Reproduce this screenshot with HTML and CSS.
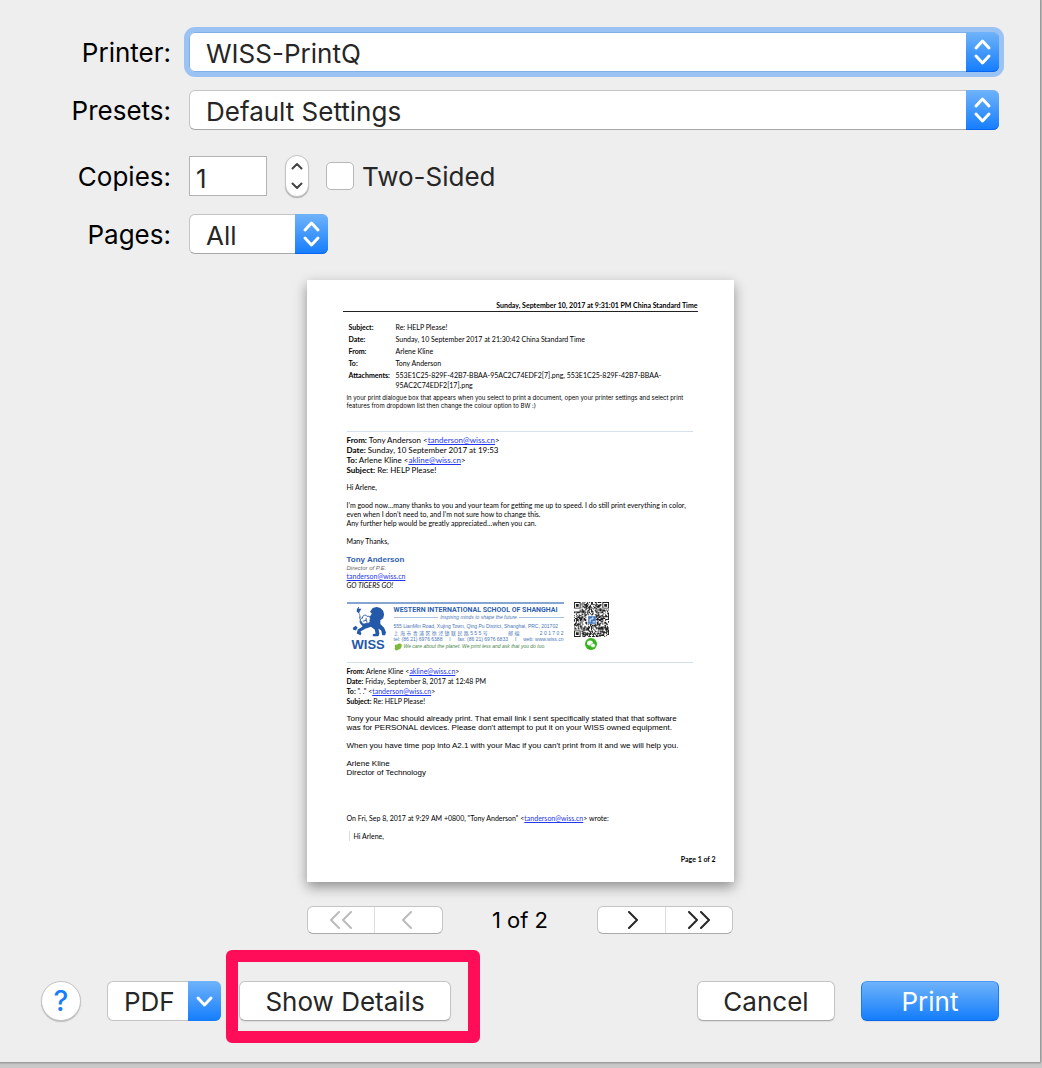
FILE: index.html
```
<!DOCTYPE html>
<html lang="en">
<head>
    <meta charset="UTF-8">
    <meta name="viewport" content="width=device-width, initial-scale=1.0">
    <title>Print</title>
    <link rel="stylesheet" href="styles.css">
</head>
<body>
    <form class="dialog">
        <div class="settings">
            <label for="printer">Printer:</label>
            <div class="select focused">
                <select id="printer"><option>WISS-PrintQ</option></select>
                <svg class="arrows" viewBox="0 0 33 40"><path d="M10 16l6.500-7 6.500 7M10 24l6.500 7 6.500-7"/></svg>
            </div>

            <label for="presets">Presets:</label>
            <div class="select">
                <select id="presets"><option>Default Settings</option></select>
                <svg class="arrows" viewBox="0 0 33 40"><path d="M10 16l6.500-7 6.500 7M10 24l6.500 7 6.500-7"/></svg>
            </div>

            <label for="copies" class="spaced">Copies:</label>
            <div class="copies spaced">
                <input type="text" id="copies" value="1">
                <div class="stepper">
                    <button type="button" aria-label="More copies"><svg viewBox="0 0 12 8"><path d="M1.500 6.500L6 2l4.500 4.500"/></svg></button>
                    <button type="button" aria-label="Fewer copies"><svg viewBox="0 0 12 8"><path d="M1.500 1.500L6 6l4.500-4.500"/></svg></button>
                </div>
                <label class="check"><input type="checkbox">Two-Sided</label>
            </div>

            <label for="pages">Pages:</label>
            <div class="select small">
                <select id="pages"><option>All</option></select>
                <svg class="arrows" viewBox="0 0 33 40"><path d="M10 16l6.500-7 6.500 7M10 24l6.500 7 6.500-7"/></svg>
            </div>
        </div>

        <div class="preview">
            <div class="page">
                <div class="page-head">Sunday, September 10, 2017 at 9:31:01 PM China Standard Time</div>
                <div class="page-body">
                    <table class="meta">
                        <tr><th>Subject:</th><td>Re: HELP Please!</td></tr>
                        <tr><th>Date:</th><td>Sunday, 10 September 2017 at 21:30:42 China Standard Time</td></tr>
                        <tr><th>From:</th><td>Arlene Kline</td></tr>
                        <tr><th>To:</th><td>Tony Anderson</td></tr>
                        <tr><th>Attachments:</th><td>553E1C25-829F-42B7-BBAA-95AC2C74EDF2[7].png, 553E1C25-829F-42B7-BBAA-<br>95AC2C74EDF2[17].png</td></tr>
                    </table>
                    <p class="note">In your print dialogue box that appears when you select to print a document, open your printer settings and select print<br>features from dropdown list then change the colour option to BW :)</p>

                    <div class="quoted first">
                        <b>From:</b> Tony Anderson &lt;<a href="#">tanderson@wiss.cn</a>&gt;<br>
                        <b>Date:</b> Sunday, 10 September 2017 at 19:53<br>
                        <b>To:</b> Arlene Kline &lt;<a href="#">akline@wiss.cn</a>&gt;<br>
                        <b>Subject:</b> Re: HELP Please!
                    </div>
                    <div class="message">
                        <p>Hi Arlene,</p>
                        <p>I’m good now…many thanks to you and your team for getting me up to speed. I do still print everything in color,<br>even when I don’t need to, and I’m not sure how to change this.<br>Any further help would be greatly appreciated…when you can.</p>
                        <p>Many Thanks,</p>
                    </div>
                    <div class="signature">
                        <div class="name">Tony Anderson</div>
                        <div class="role">Director of P.E.</div>
                        <a href="#">tanderson@wiss.cn</a>
                        <div class="cheer">GO TIGERS GO!</div>
                    </div>

                    <div class="banner">
                        <div class="school">
                            <div class="logo">
                                <svg viewBox="0 0 36 32">
                                    <path d="M7 1l3 0-2 3c-1 2 1 3 1 5 0 3-1 4-1 6 1 3 3 3 3 5l-5 3-1 4 4 2 1-2-1-2 5-3 6-2 4 3 1 4-3 1v2h6l1-3-1-5 3 2 1 5h3l1-3-2-5-4-4 0-4 3-2 1-4-1-4-3-3-4-1-4 1-3 4 2 2-2 3-7 1-3 2c-2 0-1-2-1-4 0-3-3-3-3-5 0-2 1-3 3-5z"/>
                                    <path d="M1 21l3-2 2 2-2 3-3-1zM24 5l-2 3 3 1"/>
                                    <path class="wing" d="M10 15c-3-2 0-5 1-4 0-4 4-4 5-2 3-1 4 2 3 4 1 3-3 4-4 3-2 2-4 1-5-1zM12 14l3-1 1 2M15 13l0-2M28 6l2 2"/>
                                </svg>
                                <span>WISS</span>
                            </div>
                            <div class="address">
                                <div class="school-name">WESTERN INTERNATIONAL SCHOOL OF SHANGHAI</div>
                                <div class="motto">Inspiring minds to shape the future</div>
                                <div>555 LianMin Road, Xujing Town, Qing Pu District, Shanghai, PRC, 201702</div>
                                <div class="cn"><span>上 海 市 青 浦 区 徐 泾 镇 联 民 路 5 5 5 号</span><span>邮 编</span><span>2 0 1 7 0 2</span></div>
                                <div class="contact"><span>tel: (86 21) 6976 6388</span><span>I</span><span>fax: (86 21) 6976 6833</span><span>I</span><span>web: www.wiss.cn</span></div>
                                <div class="green"><svg viewBox="0 0 8 8"><path d="M1 4c-1-2 1-3 2-2 1-2 4-2 5 0-1 1 0 2-1 3-1 2-3 1-3 2-2 1-4 0-3-3z"/></svg>We care about the planet. We print less and ask that you do too.</div>
                            </div>
                        </div>
                        <div class="wechat">
                            <svg class="qr" viewBox="0 0 37 37"></svg>
                            <svg class="badge" viewBox="0 0 12 12"><circle cx="6" cy="6" r="6" fill="#35b51c"/><ellipse cx="5" cy="5" rx="3" ry="2.500" fill="#fff"/><ellipse cx="8" cy="7.500" rx="2.500" ry="2" fill="#fff" stroke="#35b51c" stroke-width=".5"/></svg>
                        </div>
                    </div>

                    <div class="quoted">
                        <b>From:</b> Arlene Kline &lt;<a href="#">akline@wiss.cn</a>&gt;<br>
                        <b>Date:</b> Friday, September 8, 2017 at 12:48 PM<br>
                        <b>To:</b> ". ." &lt;<a href="#">tanderson@wiss.cn</a>&gt;<br>
                        <b>Subject:</b> Re: HELP Please!
                    </div>
                    <div class="message reply">
                        <p>Tony your Mac should already print. That email link I sent specifically stated that that software<br>was for PERSONAL devices. Please don't attempt to put it on your WISS owned equipment.</p>
                        <p>When you have time pop into A2.1 with your Mac if you can't print from it and we will help you.</p>
                        <p>Arlene Kline<br>Director of Technology</p>
                    </div>
                    <p class="wrote">On Fri, Sep 8, 2017 at 9:29 AM +0800, "Tony Anderson" &lt;<a href="#">tanderson@wiss.cn</a>&gt; wrote:</p>
                    <blockquote>Hi Arlene,</blockquote>
                </div>
                <div class="page-number">Page 1 of 2</div>
            </div>

            <div class="pager">
                <div class="segments">
                    <button type="button" disabled aria-label="First page"><svg viewBox="0 0 24 18"><path d="M10 1L2 9l8 8M22 1l-8 8 8 8"/></svg></button>
                    <button type="button" disabled aria-label="Previous page"><svg viewBox="0 0 24 18"><path d="M15 1L7 9l8 8"/></svg></button>
                </div>
                <span>1 of 2</span>
                <div class="segments">
                    <button type="button" aria-label="Next page"><svg viewBox="0 0 24 18"><path d="M9 1l8 8-8 8"/></svg></button>
                    <button type="button" aria-label="Last page"><svg viewBox="0 0 24 18"><path d="M2 1l8 8-8 8M14 1l8 8-8 8"/></svg></button>
                </div>
            </div>
        </div>

        <div class="actions">
            <button type="button" class="help">?</button>
            <button type="button" class="pdf"><span>PDF</span><svg viewBox="0 0 33 40"><path d="M10 17l6.500 7 6.500-7"/></svg></button>
            <div class="highlight"><button type="button" class="btn details">Show Details</button></div>
            <button type="button" class="btn cancel">Cancel</button>
            <button type="submit" class="btn print">Print</button>
        </div>
    </form>

    <script src="script.js"></script>
</body>
</html>
```

FILE: styles.css
```
* {
    box-sizing: border-box;
}
body {
    margin: 0;
    min-height: 100vh;
    padding: 0 2px 6px 0;
    background: #c8c8c8;
    font-family: Inter, "Liberation Sans", sans-serif;
    font-size: 26px;
    color: #000;
}
button, input, select {
    font: inherit;
    color: #262626;
    margin: 0;
}
svg {
    display: block;
    fill: none;
    stroke-linecap: round;
    stroke-linejoin: round;
}
.dialog {
    padding: 32px 41px 41px;
    background: #eee;
    box-shadow: 0 0 2px 1px #888;
}

/* settings */
.settings {
    display: grid;
    grid-template-columns: 130px 1fr;
    gap: 18px;
    align-items: center;
}
.settings > label {
    text-align: right;
}
.spaced {
    margin-top: 8px;
}
.select {
    position: relative;
    height: 40px;
    border-radius: 6px;
}
.select select {
    appearance: none;
    width: 100%;
    height: 40px;
    padding: 2px 40px 0 16px;
    border: 1px solid #c4c4c4;
    border-bottom-color: #a8a8a8;
    border-radius: 6px;
    background: #fff;
    outline: none;
}
.select.focused {
    box-shadow: 0 0 0 5px #9ac3f4;
}
.select.focused select {
    border-color: #7fb0e6;
}
.select.small {
    width: 139px;
}
.arrows {
    position: absolute;
    top: 0;
    right: 0;
    width: 33px;
    height: 40px;
    border-radius: 0 6px 6px 0;
    background: linear-gradient(#6fb3fa, #147dfd);
    box-shadow: inset 0 -1px #0a66ee;
    stroke: #fff;
    stroke-width: 3;
    pointer-events: none;
}
.copies {
    display: flex;
    align-items: center;
    height: 40px;
}
.copies input[type="text"] {
    width: 78px;
    height: 40px;
    padding: 4px 6px 0;
    border: 1px solid #b4b4b4;
    background: #fff;
}
.stepper {
    display: flex;
    flex-direction: column;
    width: 24px;
    height: 42px;
    margin: 0 17px 0 18px;
    border: 1px solid #c4c4c4;
    border-radius: 12px;
    background: #fff;
    box-shadow: 0 1px 1px #aaa;
}
.stepper button {
    flex: 1;
    display: flex;
    align-items: center;
    justify-content: center;
    padding: 0;
    border: none;
    background: none;
}
.stepper svg {
    width: 12px;
    height: 8px;
    stroke: #444;
    stroke-width: 2;
}
.check {
    display: flex;
    align-items: center;
    gap: 8px;
    color: #262626;
}
.check input {
    appearance: none;
    width: 28px;
    height: 28px;
    border: 1px solid #b8b8b8;
    border-radius: 5px;
    background: #fff;
}

/* page preview */
.preview {
    width: 427px;
    margin: 26px auto 0;
}
.page {
    height: 602px;
    padding: 20px 18px 0 36px;
    background: #fff;
    box-shadow: 0 5px 12px rgba(0, 0, 0, 0.4);
    font-family: Lato, sans-serif;
    font-size: 7px;
    line-height: 10px;
    white-space: nowrap;
}
.page p {
    margin: 0;
}
.page a {
    color: #2337f0;
}
.page-head {
    margin-right: 18px;
    height: 12px;
    border-bottom: 1px solid #222;
    font-weight: bold;
    text-align: right;
}
.page-body {
    margin: 9px 23px 0 4px;
}
.meta {
    border-collapse: collapse;
    margin-left: 2px;
}
.meta th, .meta td {
    padding: 1px 0;
    text-align: left;
    vertical-align: top;
}
.meta th {
    width: 47px;
    max-width: 47px;
}
.note {
    font-family: Inter, sans-serif;
    font-size: 6px;
    line-height: 8px;
    padding-top: 3px;
}
.quoted {
    border-top: 1px solid #d5e0ea;
    padding-top: 3px;
}
.quoted.first {
    margin-top: 21px;
    font-size: 8px;
}
.message {
    display: flex;
    flex-direction: column;
    gap: 9px;
    margin-top: 8px;
    line-height: 9px;
}
.signature {
    margin-top: 9px;
    line-height: 9px;
}
.name {
    color: #2f5fae;
    font: bold 8px/9px "Liberation Sans", sans-serif;
}
.role {
    color: #666;
    font: italic 6px/8px "Liberation Sans", sans-serif;
}
.cheer {
    font-style: italic;
}
.banner {
    display: flex;
    gap: 10px;
    height: 60px;
    margin-top: 12px;
    color: #4a76b8;
    font: 5px/7px "Liberation Sans", "Noto Sans CJK SC", sans-serif;
}
.school {
    display: flex;
    width: 217px;
    gap: 8px;
    padding-left: 5px;
    border-top: 2px solid #86a5d3;
}
.logo {
    width: 34px;
    color: #2459a9;
    font: 900 13px/12px "Liberation Sans", sans-serif;
}
.logo svg {
    width: 34px;
    height: 32px;
    margin-top: 3px;
    fill: #2459a9;
}
.logo .wing {
    fill: #fff;
    stroke: #2459a9;
}
.address {
    flex: 1;
    padding-top: 2px;
}
.school-name {
    color: #2f5fae;
    font-family: Roboto, sans-serif;
    font-weight: bold;
    font-size: 7px;
    line-height: 8px;
}
.motto {
    display: flex;
    align-items: center;
    gap: 2px;
    margin-bottom: 2px;
    font-style: italic;
}
.motto::before, .motto::after {
    content: "";
    flex: 1;
    height: 1px;
    background: #a9c0e0;
}
.cn, .contact {
    display: flex;
    justify-content: space-between;
}
.cn {
    line-height: 6px;
}
.green {
    display: flex;
    gap: 2px;
    color: #47864a;
    font-style: italic;
}
.green svg {
    width: 8px;
    height: 8px;
    fill: #7db93c;
}
.qr {
    width: 35px;
    height: 35px;
    fill: #222;
}
.badge {
    width: 12px;
    height: 12px;
    margin: 1px auto 0;
}
.reply {
    font-family: "Liberation Sans", sans-serif;
    font-size: 8px;
}
.wrote {
    padding-top: 36px;
}
blockquote {
    margin: 8px 0 0 2px;
    padding-left: 4px;
    border-left: 1px solid #ddd;
}
.page-number {
    margin-top: 13px;
    font-weight: bold;
    text-align: right;
}

/* pager */
.pager {
    display: flex;
    justify-content: space-between;
    align-items: center;
    height: 30px;
    margin-top: 23px;
    font-size: 22px;
}
.segments {
    display: flex;
    width: 136px;
    height: 28px;
    border: 1px solid #c4c4c4;
    border-bottom-color: #aaa;
    border-radius: 6px;
    background: #fff;
}
.segments button {
    flex: 1;
    display: flex;
    align-items: center;
    justify-content: center;
    padding: 0;
    border: none;
    background: none;
}
.segments button + button {
    border-left: 1px solid #ddd;
}
.segments svg {
    width: 24px;
    height: 18px;
    stroke: #262626;
    stroke-width: 2;
}
.segments button:disabled svg {
    stroke: #bbb;
}

/* bottom buttons */
.actions {
    display: flex;
    align-items: center;
    margin-top: 46px;
}
.btn {
    width: 138px;
    height: 40px;
    padding: 0;
    border: 1px solid #c4c4c4;
    border-bottom-color: #aaa;
    border-radius: 6px;
    background: #fff;
    box-shadow: 0 1px 1px #ddd;
}
.help {
    width: 40px;
    height: 40px;
    padding: 0;
    border: 1px solid #c4c4c4;
    border-radius: 50%;
    background: #fff;
    box-shadow: 0 1px 1px #bbb;
    color: #147dfd;
    font-size: 28px;
    font-weight: 500;
}
.pdf {
    display: flex;
    justify-content: space-between;
    align-items: center;
    width: 114px;
    height: 40px;
    margin-left: 26px;
    padding: 0 0 0 16px;
    border: 1px solid #c4c4c4;
    border-right: none;
    border-radius: 6px;
    background: #fff;
}
.pdf svg {
    width: 33px;
    height: 40px;
    border-radius: 0 6px 6px 0;
    background: linear-gradient(#6fb3fa, #147dfd);
    stroke: #fff;
    stroke-width: 3;
}
.highlight {
    position: relative;
    margin-left: 18px;
}
.highlight::after {
    content: "";
    position: absolute;
    inset: -31px -29px -22px -13px;
    border: 12px solid #ff0d58;
    border-radius: 6px;
    pointer-events: none;
}
.details {
    width: 212px;
}
.cancel {
    margin-left: auto;
}
.print {
    margin-left: 26px;
    border-color: #4a9bf5 #1a7cf5 #0a66ee;
    background: linear-gradient(#6fb3fa, #147dfd);
    color: #fff;
}
```

FILE: script.js
```
// fills the QR code of the signature, module by module
const qr = document.querySelector(".qr");
const size = 37;
let seed = 17;
let d = "";

function inCorner(x, y) {
    return (x < 8 && y < 8) || (x > 28 && y < 8) || (x < 8 && y > 28);
}

for (let y = 0; y < size; y++) {
    for (let x = 0; x < size; x++) {
        seed = (seed * 1103515245 + 12345) % 2147483648;
        const inLogo = x > 13 && x < 23 && y > 13 && y < 23;
        if (!inCorner(x, y) && !inLogo && seed / 2147483648 > 0.45) {
            d += `M${x} ${y}h1v1h-1z`;
        }
    }
}

// the three finder squares
[[0, 0], [30, 0], [0, 30]].forEach(([x, y]) => {
    d += `M${x} ${y}h7v7h-7zM${x + 1} ${y + 1}v5h5v-5zM${x + 2} ${y + 2}h3v3h-3z`;
});

qr.innerHTML = `<path d="${d}"/><rect x="15" y="15" width="8" height="8" fill="#3f74bd"/><path d="M17 21v-3h3v-2M20 21h2" stroke="#fff" fill="none"/>`;
```
